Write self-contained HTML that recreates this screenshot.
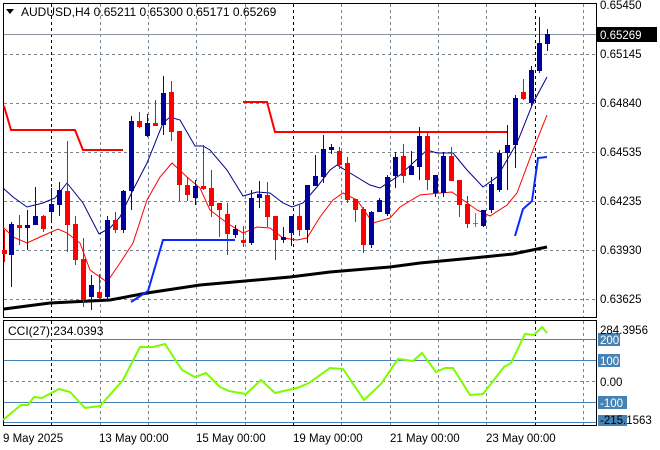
<!DOCTYPE html>
<html><head><meta charset="utf-8"><style>
html,body{margin:0;padding:0;background:#fff;}
svg{display:block;font-family:"Liberation Sans",sans-serif;}
</style></head><body>
<svg width="660" height="450" xmlns="http://www.w3.org/2000/svg">
<rect width="660" height="450" fill="#fff"/>
<!-- grid main -->
<g stroke="#7a8591" stroke-width="1" stroke-dasharray="3,3" fill="none">
<path d="M4 54.5H596M4 103.5H596M4 152.5H596M4 201.5H596M4 250.5H596M4 299.5H596"/>
<path d="M100.5 4V317M148.5 4V317M196.5 4V317M245.5 4V317M341.5 4V317M390.5 4V317M438.5 4V317M486.5 4V317M583.5 4V317"/>
<path d="M100.5 321V425M148.5 321V425M196.5 321V425M245.5 321V425M341.5 321V425M390.5 321V425M438.5 321V425M486.5 321V425M583.5 321V425"/>
<path d="M4 381.5H596"/>
</g>
<g stroke="#000" stroke-width="1" stroke-dasharray="3,3" fill="none">
<path d="M51.5 4V317M293.5 4V317M535.5 4V317M51.5 321V425M293.5 321V425M535.5 321V425"/>
</g>
<!-- current price line -->
<path d="M4 34.5H596" stroke="#8a939c" stroke-width="1"/>
<!-- frames -->
<rect x="3.5" y="3.5" width="593" height="314" fill="none" stroke="#000"/>
<rect x="3.5" y="320.5" width="593" height="105" fill="none" stroke="#000"/>

<!-- black MA -->
<polyline fill="none" stroke="#000" stroke-width="3" points="4,309 50,303 110,300 147,293 200,285 290,277 330,272 390,267 420,263 473,258 513,254 547,247"/>
<!-- red step -->
<polyline fill="none" stroke="#f00" stroke-width="2" points="4,106 11,130 75,130 83,150 123,150"/>
<polyline fill="none" stroke="#f00" stroke-width="2" points="243,102 267,102 275,132 507,132"/>
<!-- blue step -->
<polyline fill="none" stroke="#0a28ff" stroke-width="2" points="131,302 148,291 163,240 235,240"/>
<polyline fill="none" stroke="#0a28ff" stroke-width="2" points="515,236 523,209 532,201 538,158 547,157"/>
<!-- navy MA -->
<polyline fill="none" stroke="#00008b" stroke-width="1" points="3,188 13,197 27,207 43,203 55,198 67,183 83,203 99,234 110,228 120,217 133,190 147,163 163,123 170,117 180,120 195,146 203,146 210,150 227,170 243,196 257,192 270,193 283,203 292,207 303,203 317,187 330,170 337,165 350,173 370,185 380,188 400,175 427,150 437,153 453,153 467,170 483,187 497,177 517,143 533,103 547,77"/>
<!-- red MA -->
<polyline fill="none" stroke="#f00" stroke-width="1" points="3,227 13,237 27,243 40,237 58,229 67,233 80,243 90,270 107,282 120,263 133,243 147,200 160,177 172,163 187,177 200,188 210,210 227,223 243,233 257,227 270,228 283,238 297,240 307,238 320,217 333,200 343,193 357,200 373,223 390,218 400,207 420,195 440,193 452,192 463,200 477,210 490,216 507,205 517,193 533,150 547,115"/>

<!-- candles -->
<g id="c">
<!-- red -->
<g stroke="#f00" fill="#f00">
<path d="M4.5 230V262M19.5 215V245M43.5 215V232M67.5 141V252M75.5 216V265M83.5 238V307M99.5 274V300M115.5 212V233M139.5 112V128M155.5 100V126M171.5 81V141M179.5 131V201M187.5 177V201M203.5 145V190M211.5 170V217M219.5 203V237M227.5 203V255M243.5 226V247M267.5 182V227M275.5 216V260M299.5 204V236M339.5 147V169M347.5 157V203M355.5 199V222M363.5 207V253M403.5 144V183M427.5 131V190M451.5 147V181M459.5 180V217M467.5 196V228M523.5 79V100"/>
</g>
<g fill="#f00">
<rect x="2" y="250" width="5" height="4"/><rect x="17" y="225" width="5" height="3"/><rect x="41" y="216" width="5" height="13"/>
<rect x="65" y="191" width="5" height="34"/><rect x="73" y="224" width="5" height="36"/><rect x="81" y="259" width="5" height="41"/>
<rect x="97" y="292" width="5" height="6"/><rect x="113" y="220" width="5" height="10"/><rect x="137" y="121" width="5" height="6"/>
<rect x="153" y="123" width="5" height="3"/><rect x="169" y="92" width="5" height="40"/><rect x="177" y="131" width="5" height="54"/>
<rect x="185" y="185" width="5" height="10"/><rect x="201" y="186" width="5" height="3"/><rect x="209" y="188" width="5" height="18"/>
<rect x="217" y="203" width="5" height="7"/><rect x="225" y="214" width="5" height="20"/><rect x="241" y="240" width="5" height="3"/>
<rect x="265" y="195" width="5" height="22"/><rect x="273" y="216" width="5" height="24"/><rect x="297" y="216" width="5" height="14"/>
<rect x="337" y="151" width="5" height="14"/><rect x="345" y="163" width="5" height="37"/><rect x="353" y="199" width="5" height="11"/>
<rect x="361" y="209" width="5" height="36"/><rect x="401" y="156" width="5" height="20"/><rect x="425" y="136" width="5" height="44"/>
<rect x="449" y="156" width="5" height="25"/><rect x="457" y="180" width="5" height="25"/><rect x="465" y="204" width="5" height="20"/>
<rect x="521" y="92" width="5" height="7"/>
</g>
<!-- blue -->
<g stroke="#0000c0" fill="none">
<path d="M11.5 222V287M27.5 210V250M35.5 187V225M51.5 188V222M59.5 182V216M91.5 275V310M107.5 216V300M123.5 190V233M131.5 116V210M147.5 114V137M163.5 76V135M195.5 180V205M235.5 225V238M251.5 190V245M259.5 181V208M283.5 227V243M291.5 216V246M307.5 185V243M315.5 155V186M323.5 135V183M331.5 144V154M371.5 211V248M379.5 198V212M387.5 175V216M395.5 152V188M411.5 151V175M419.5 127V180M435.5 175V197M443.5 152V197M483.5 210V227M491.5 177V213M499.5 150V192M507.5 125V190M515.5 95V168M531.5 66V106M539.5 17V73M547.5 29V51"/>
</g>
<g fill="#00009c">
<rect x="9" y="224" width="5" height="31"/><rect x="25" y="225" width="5" height="3"/><rect x="33" y="216" width="5" height="9"/>
<rect x="49" y="204" width="5" height="8"/><rect x="57" y="190" width="5" height="15"/><rect x="89" y="285" width="5" height="12"/>
<rect x="105" y="220" width="5" height="77"/><rect x="121" y="191" width="5" height="39"/><rect x="129" y="121" width="5" height="70"/>
<rect x="145" y="123" width="5" height="13"/><rect x="161" y="93" width="5" height="32"/><rect x="193" y="186" width="5" height="12"/>
<rect x="233" y="229" width="5" height="6"/><rect x="249" y="198" width="5" height="45"/><rect x="257" y="194" width="5" height="4"/>
<rect x="281" y="237" width="5" height="3"/><rect x="289" y="216" width="5" height="17"/><rect x="305" y="185" width="5" height="45"/>
<rect x="313" y="176" width="5" height="10"/><rect x="321" y="149" width="5" height="28"/><rect x="329" y="147" width="5" height="3"/>
<rect x="369" y="212" width="5" height="33"/><rect x="377" y="200" width="5" height="12"/><rect x="385" y="177" width="5" height="37"/>
<rect x="393" y="157" width="5" height="19"/><rect x="409" y="166" width="5" height="9"/><rect x="417" y="136" width="5" height="31"/>
<rect x="433" y="175" width="5" height="18"/><rect x="441" y="156" width="5" height="37"/><rect x="481" y="210" width="5" height="16"/>
<rect x="489" y="184" width="5" height="26"/><rect x="497" y="153" width="5" height="37"/><rect x="505" y="145" width="5" height="8"/>
<rect x="513" y="98" width="5" height="47"/><rect x="529" y="70" width="5" height="33"/><rect x="537" y="43" width="5" height="28"/>
<rect x="545" y="34" width="5" height="10"/>
</g>
<path d="M475.5 213V227M473 223.5H478" stroke="#00d000"/>
</g>

<!-- CCI levels -->
<g stroke="#4682b4" stroke-width="1">
<path d="M4 339.5H596M4 360.5H596M4 402.5H596M4 422.5H596"/>
</g>
<polyline fill="none" stroke="#7cfc00" stroke-width="2" points="3,420 21,405 28,405 34,397 42,398 59,389 70,392 85,408 100,406 123,380 140,347 153,347 165,344 182,370 195,377 206,373 220,387 229,391 246,394 261,380 275,393 297,388 309,383 330,368 343,369 364,400 381,384 398,359 413,361 422,353 436,372 445,368 453,368 470,395 483,394 504,367 511,363 525,334 534,335 542,327 547,333"/>

<!-- header -->
<path d="M6 9H14L10 14Z" fill="#000"/>
<text x="21" y="16" font-size="12" fill="#000">AUDUSD,H4  0.65211 0.65300 0.65171 0.65269</text>
<text x="8" y="335" font-size="12" fill="#000">CCI(27) 234.0393</text>

<!-- right axis -->
<g font-size="11.5" fill="#000">
<text x="600" y="9">0.65450</text>
<text x="600" y="58">0.65145</text>
<text x="600" y="107">0.64840</text>
<text x="600" y="156">0.64535</text>
<text x="600" y="205">0.64235</text>
<text x="600" y="254">0.63930</text>
<text x="600" y="303">0.63625</text>
</g>
<rect x="597" y="27" width="60" height="15" fill="#000"/>
<text x="600" y="39" font-size="11.5" fill="#fff">0.65269</text>
<g fill="#4682b4">
<rect x="598" y="333" width="22" height="13"/>
<rect x="598" y="354" width="22" height="13"/>
<rect x="598" y="396" width="29" height="13"/>
<rect x="598" y="415" width="29" height="11"/>
</g>
<g font-size="11.5">
<text x="600" y="334" fill="#000">284.3956</text>
<text x="600" y="344" fill="#fff">200</text>
<text x="600" y="365" fill="#fff">100</text>
<text x="600" y="386" fill="#000">0.00</text>
<text x="600" y="407" fill="#fff">-100</text>
<text x="600" y="424" fill="#000">-215.1563</text>
</g>

<!-- date axis -->
<g font-size="11.5" fill="#000">
<text x="3" y="442">9 May 2025</text>
<text x="99" y="442">13 May 00:00</text>
<text x="196" y="442">15 May 00:00</text>
<text x="293" y="442">19 May 00:00</text>
<text x="390" y="442">21 May 00:00</text>
<text x="486" y="442">23 May 00:00</text>
</g>
</svg>
</body></html>
